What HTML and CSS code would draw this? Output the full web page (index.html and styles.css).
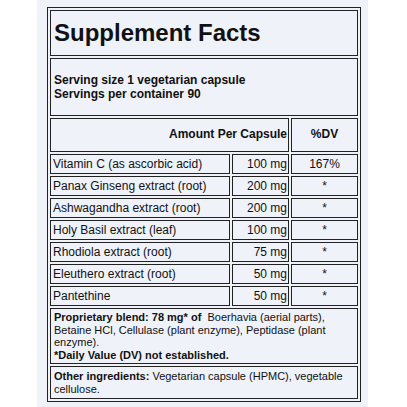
FILE: index.html
```html
<!DOCTYPE html>
<html lang="en">
<head>
  <meta charset="UTF-8">
  <title>Supplement Facts</title>
  <link rel="stylesheet" href="styles.css">
</head>
<body>
  <div class="panel">
    <table class="facts">
      <colgroup>
        <col class="col-name">
        <col class="col-amt">
        <col class="col-dv">
      </colgroup>
      <tr>
        <td colspan="3" class="title">Supplement Facts</td>
      </tr>
      <tr>
        <td colspan="3" class="serving">Serving size 1 vegetarian capsule<br>Servings per container 90</td>
      </tr>
      <tr>
        <th colspan="2" class="head-amt">Amount Per Capsule</th>
        <th class="head-dv">%DV</th>
      </tr>
      <tr><td class="name">Vitamin C (as ascorbic acid)</td><td class="amt">100 mg</td><td class="dv">167%</td></tr>
      <tr><td class="name">Panax Ginseng extract (root)</td><td class="amt">200 mg</td><td class="dv">*</td></tr>
      <tr><td class="name">Ashwagandha extract (root)</td><td class="amt">200 mg</td><td class="dv">*</td></tr>
      <tr><td class="name">Holy Basil extract (leaf)</td><td class="amt">100 mg</td><td class="dv">*</td></tr>
      <tr><td class="name">Rhodiola extract (root)</td><td class="amt">75 mg</td><td class="dv">*</td></tr>
      <tr><td class="name">Eleuthero extract (root)</td><td class="amt">50 mg</td><td class="dv">*</td></tr>
      <tr><td class="name">Pantethine</td><td class="amt">50 mg</td><td class="dv">*</td></tr>
      <tr>
        <td colspan="3" class="note blend"><b>Proprietary blend: 78 mg* of</b>&nbsp; Boerhavia (aerial parts), Betaine HCl, Cellulase (plant enzyme), Peptidase (plant enzyme).<br><b>*Daily Value (DV) not established.</b></td>
      </tr>
      <tr>
        <td colspan="3" class="note other"><b>Other ingredients:</b> Vegetarian capsule (HPMC), vegetable cellulose.</td>
      </tr>
    </table>
  </div>
</body>
</html>
```

FILE: styles.css
```css
body {
  margin: 0;
  background: #fff;
  font-family: "Liberation Sans", Arial, sans-serif;
  color: #111;
}
.panel {
  width: 331px;
  height: 407px;
  margin-left: 37px;
  padding-top: 7px;
  box-sizing: border-box;
  background: #eff2f9;
}
.facts {
  width: 314px;
  margin-left: 10px;
  border: 1px solid #222;
  border-collapse: separate;
  border-spacing: 2px;
  table-layout: fixed;
}
.col-name {
  width: 180px;
}
.col-amt {
  width: 57px;
}
.col-dv {
  width: 67px;
}
.facts td,
.facts th {
  border: 1px solid #222;
  font-size: 12px;
  line-height: 14px;
  padding: 2px 2px;
  vertical-align: middle;
  white-space: nowrap;
}
.title {
  font-size: 24px !important;
  line-height: 28px !important;
  font-weight: bold;
  padding: 8px 3px !important;
}
.serving {
  font-weight: bold;
  padding: 14px 3px !important;
}
.head-amt {
  text-align: right;
  padding: 8px 1px 10px 2px !important;
}
.head-dv {
  text-align: center;
  padding: 8px 2px 10px !important;
}
.amt {
  text-align: right;
  padding-right: 1px !important;
}
.dv {
  text-align: center;
}
.note {
  font-size: 11px !important;
  line-height: 12.5px !important;
  padding: 2px 3px !important;
  white-space: normal !important;
}
.other {
  padding: 3px 3px !important;
}
```
